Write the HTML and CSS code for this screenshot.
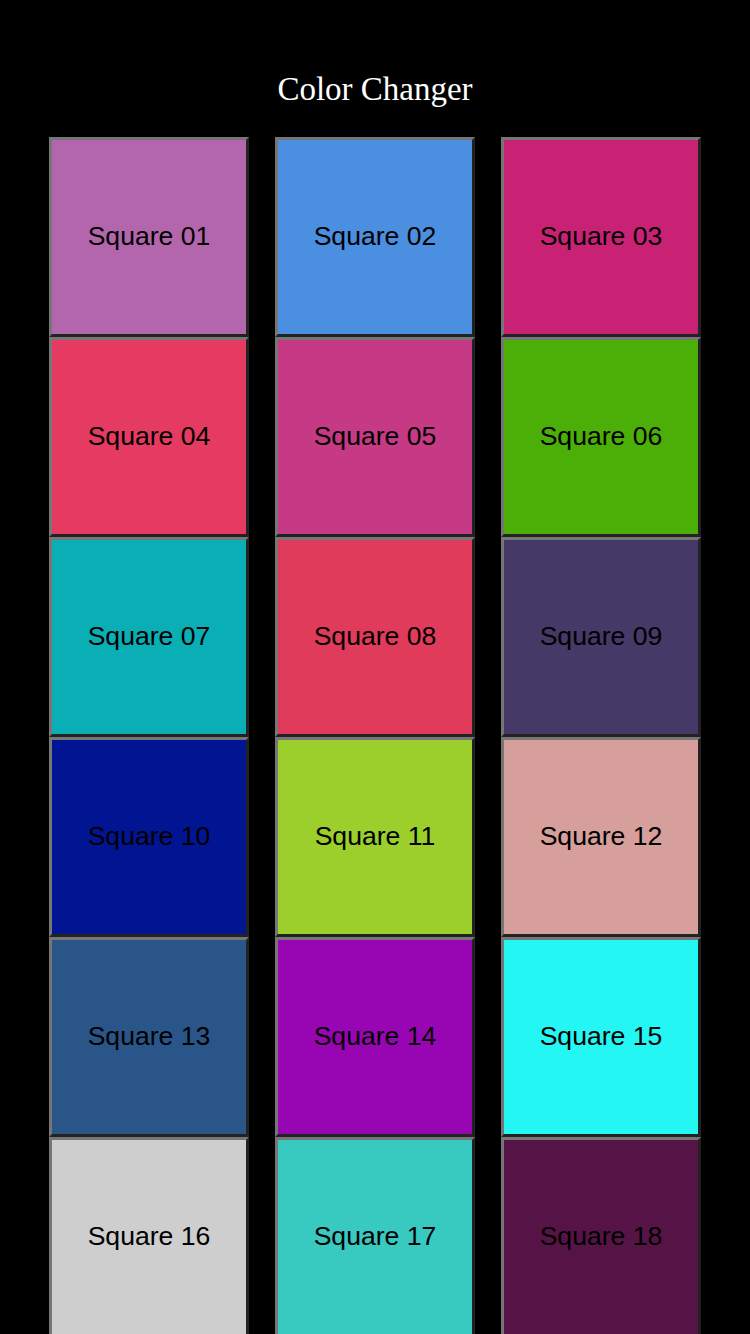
FILE: index.html
```html
<!DOCTYPE html>
<html>
<head>
<meta charset="utf-8">
<link rel="stylesheet" href="styles.css">
</head>
<body>
<h1 class="title">Color Changer</h1>
<div class="grid">
  <div class="sq c01">Square 01</div>
  <div class="sq c02">Square 02</div>
  <div class="sq c03">Square 03</div>
  <div class="sq c04">Square 04</div>
  <div class="sq c05">Square 05</div>
  <div class="sq c06">Square 06</div>
  <div class="sq c07">Square 07</div>
  <div class="sq c08">Square 08</div>
  <div class="sq c09">Square 09</div>
  <div class="sq c10">Square 10</div>
  <div class="sq c11">Square 11</div>
  <div class="sq c12">Square 12</div>
  <div class="sq c13">Square 13</div>
  <div class="sq c14">Square 14</div>
  <div class="sq c15">Square 15</div>
  <div class="sq c16">Square 16</div>
  <div class="sq c17">Square 17</div>
  <div class="sq c18">Square 18</div>
</div>
</body>
</html>
```
FILE: styles.css
```css
html, body {
  margin: 0;
  padding: 0;
  background: #000;
}
body {
  overflow: hidden;
  height: 1334px;
}
.title {
  margin: 0;
  padding-top: 70px;
  height: 38px;
  line-height: 38px;
  text-align: center;
  color: #fff;
  font-family: "Liberation Serif", "DejaVu Serif", serif;
  font-weight: normal;
  font-size: 33px;
}
.grid {
  margin-top: 29px;
  display: grid;
  grid-template-columns: repeat(3, 200px);
  grid-auto-rows: 200px;
  column-gap: 26px;
  justify-content: center;
}
.sq {
  box-sizing: border-box;
  border: 3px solid;
  border-color: #767676 #222 #222 #767676;
  padding-bottom: 2px;
  display: flex;
  align-items: center;
  justify-content: center;
  font-family: "Liberation Sans", Arial, sans-serif;
  font-size: 26.6px;
  color: #000;
}
.c01 { background: #b466ad; }
.c02 { background: #4b8fe0; }
.c03 { background: #c92275; }
.c04 { background: #e53a61; }
.c05 { background: #c63a85; }
.c06 { background: #4caf08; }
.c07 { background: #0aafb5; }
.c08 { background: #e13b5b; }
.c09 { background: #453968; }
.c10 { background: #011593; }
.c11 { background: #9ccf2b; }
.c12 { background: #d69f9b; }
.c13 { background: #2a5589; }
.c14 { background: #9806b3; }
.c15 { background: #24f6f3; }
.c16 { background: #cecece; }
.c17 { background: #38c9c1; }
.c18 { background: #561345; }
```
